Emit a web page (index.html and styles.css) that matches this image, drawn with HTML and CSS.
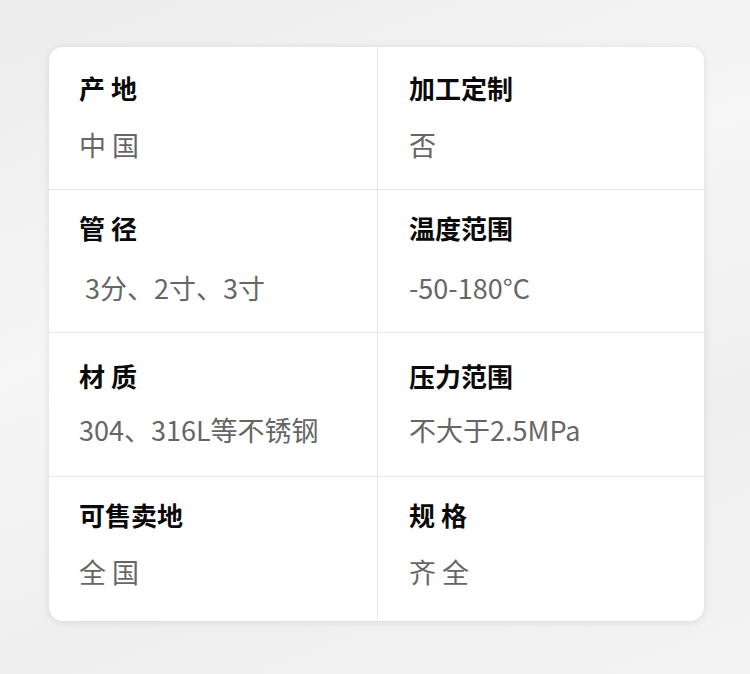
FILE: index.html
```html
<!DOCTYPE html>
<html lang="zh">
<head>
<meta charset="utf-8">
<link rel="stylesheet" href="styles.css">
</head>
<body>
<div class="page">
  <div class="card">
    <div class="cell r1"><div class="label">产 地</div><div class="value">中 国</div></div>
    <div class="cell r1 right"><div class="label">加工定制</div><div class="value">否</div></div>
    <div class="cell r2"><div class="label">管 径</div><div class="value">&nbsp;3分、2寸、3寸</div></div>
    <div class="cell r2 right"><div class="label">温度范围</div><div class="value">-50-180°C</div></div>
    <div class="cell r3"><div class="label">材 质</div><div class="value">304、316L等不锈钢</div></div>
    <div class="cell r3 right"><div class="label">压力范围</div><div class="value">不大于2.5MPa</div></div>
    <div class="cell r4 last"><div class="label">可售卖地</div><div class="value">全 国</div></div>
    <div class="cell r4 right last"><div class="label">规 格</div><div class="value">齐 全</div></div>
  </div>
</div>
</body>
</html>
```
FILE: styles.css
```css
html, body {
  margin: 0;
  padding: 0;
}
body {
  width: 750px;
  height: 674px;
  overflow: hidden;
  background: linear-gradient(160deg, #ececec 0%, #f6f6f6 40%, #efefef 70%, #f3f3f3 100%);
  font-family: "Noto Sans CJK SC", "Noto Sans", sans-serif;
}
.page {
  padding: 47px 46px 0 49px;
}
.card {
  width: 655px;
  height: 574px;
  background: #fff;
  border-radius: 14px;
  box-shadow: 0 1px 8px rgba(0,0,0,0.10);
  display: grid;
  grid-template-columns: 328px 327px;
  grid-template-rows: 143px 143px 144px 144px;
  overflow: hidden;
}
.cell {
  border-bottom: 1px solid #e8e8e8;
  padding: 0 0 0 30px;
  box-sizing: border-box;
  display: flex;
  flex-direction: column;
}
.cell.right {
  border-left: 1px solid #e8e8e8;
  padding-left: 31px;
}
.cell.last {
  border-bottom: none;
}
.label {
  font-size: 26px;
  font-weight: 700;
  color: #0a0a0a;
  line-height: 36px;
  white-space: pre;
}
.value {
  font-size: 27px;
  color: #666;
  line-height: 36px;
  white-space: pre;
}
.r1 .label { margin-top: 23px; }
.r1 .value { margin-top: 21px; }
.r2 .label { margin-top: 20px; }
.r2 .value { margin-top: 24px; }
.r3 .label { margin-top: 25px; }
.r3 .value { margin-top: 18px; }
.r4 .label { margin-top: 20px; }
.r4 .value { margin-top: 21px; }
```
